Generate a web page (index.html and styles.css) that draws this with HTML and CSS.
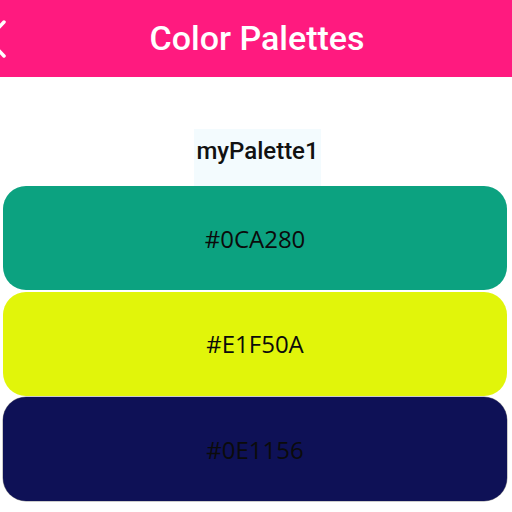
FILE: index.html
```html
<!DOCTYPE html>
<html>
<head>
<meta charset="utf-8">
<link rel="stylesheet" href="styles.css">
</head>
<body>
  <header class="app-bar">
    <svg class="back" width="24" height="40" viewBox="0 0 24 40">
      <polyline points="20,3 4,20 20,37" fill="none" stroke="#fff" stroke-width="3.5" stroke-linecap="round" stroke-linejoin="round"/>
    </svg>
    <h1 class="title">Color Palettes</h1>
  </header>
  <main class="content">
    <div class="label-row"><span class="palette-name">myPalette1</span></div>
    <div class="swatches">
      <div class="swatch swatch-green">#0CA280</div>
      <div class="swatch swatch-yellow">#E1F50A</div>
      <div class="swatch swatch-navy">#0E1156</div>
    </div>
  </main>
</body>
</html>
```
FILE: styles.css
```css
* { box-sizing: border-box; }
html, body { margin: 0; padding: 0; background: #fff; }
body {
  width: 512px;
  height: 512px;
  overflow: hidden;
  font-family: "Open Sans", "Noto Sans", sans-serif;
}
.app-bar {
  position: relative;
  height: 77px;
  background: #ff1a7f;
  display: flex;
  align-items: center;
  justify-content: center;
}
.back {
  position: absolute;
  left: -16px;
  top: 19px;
}
.title {
  margin: 0;
  color: #fff;
  font-family: Roboto, "Open Sans", sans-serif;
  font-size: 34px;
  font-weight: 500;
  line-height: 1;
  letter-spacing: 0;
  padding-left: 2px;
  padding-bottom: 2px;
}
.content {
  padding-top: 52px;
}
.label-row {
  display: flex;
  justify-content: center;
  padding-left: 3px;
}
.palette-name {
  height: 57px;
  display: flex;
  align-items: center;
  padding: 0 2px 14px;
  background: #f3fbfe;
  font-family: Roboto, "Open Sans", sans-serif;
  font-size: 24px;
  font-weight: 500;
  color: #111;
}
.swatches {
  display: flex;
  flex-direction: column;
  gap: 1.5px;
  margin-left: 3px;
  width: 504px;
}
.swatch {
  height: 104px;
  border-radius: 23px;
  display: flex;
  align-items: center;
  justify-content: center;
  font-size: 24px;
  color: #0b0b0b;
}
.swatch-green { background: #0ca280; }
.swatch-yellow { background: #e1f50a; }
.swatch-navy { background: #0e1156; box-shadow: 0 0 0 0.5px rgba(0,0,0,0.4); }
```
